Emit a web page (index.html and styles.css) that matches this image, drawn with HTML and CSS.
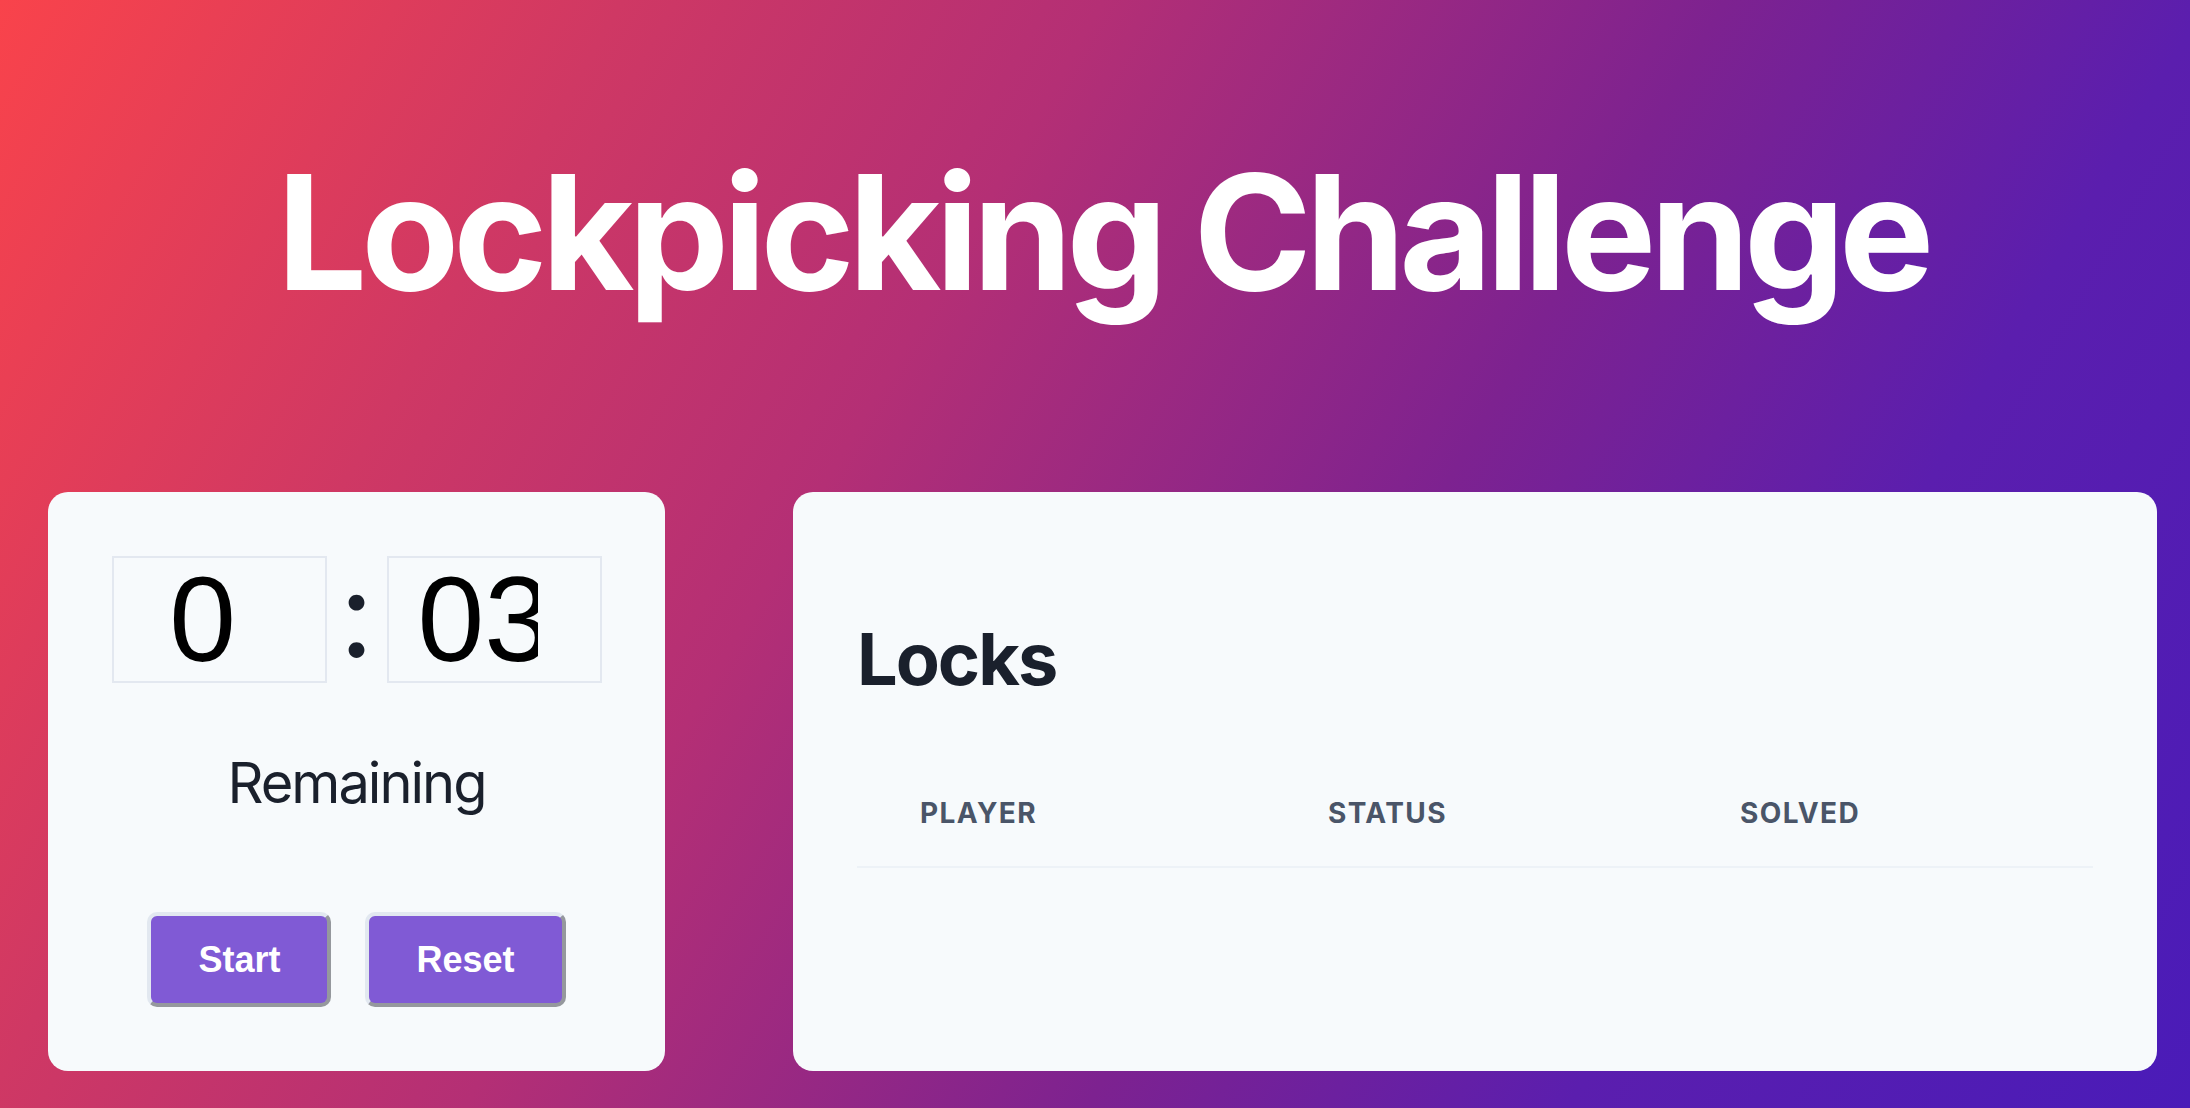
FILE: index.html
```html
<!DOCTYPE html>
<html lang="en">
<head>
<meta charset="utf-8">
<title>Lockpicking Challenge</title>
<link rel="stylesheet" href="styles.css">
</head>
<body>
<div class="page">
  <h1 class="title">Lockpicking Challenge</h1>
  <div class="panels">
    <section class="card timer">
      <div class="clock">
        <div class="digit-box"><span class="digit-text centered">0</span></div>
        <span class="colon">:</span>
        <div class="digit-box"><span class="digit-text clipped">03</span></div>
      </div>
      <p class="remaining">Remaining</p>
      <div class="actions">
        <button class="btn" type="button">Start</button>
        <button class="btn" type="button">Reset</button>
      </div>
    </section>
    <section class="card locks">
      <h2 class="locks-title">Locks</h2>
      <div class="table">
        <div class="thead">
          <div class="th">Player</div>
          <div class="th">Status</div>
          <div class="th">Solved</div>
        </div>
      </div>
    </section>
  </div>
</div>
</body>
</html>
```

FILE: styles.css
```css
* { box-sizing: border-box; }
html, body { margin: 0; padding: 0; }
body {
  width: 2190px;
  height: 1108px;
  overflow: hidden;
  font-family: Inter, "Noto Sans", sans-serif;
  background: linear-gradient(120deg, #f9434b 0%, #cf3864 22%, #b42f75 39%, #7d2290 61%, #5b1eae 78%, #4a1bb8 100%);
  color: #1a202c;
}
.page {
  padding: 0 33px 0 48px;
}
.title {
  margin: 0;
  padding-top: 136px;
  height: 492px;
  font-size: 160px;
  line-height: 192px;
  font-weight: 700;
  color: #ffffff;
  text-align: center;
  letter-spacing: -6px;
}
.panels {
  display: grid;
  grid-template-columns: 617px 1fr;
  column-gap: 128px;
  height: 579px;
}
.card {
  background: #f7fafc;
  border-radius: 20px;
  padding: 64px;
}
.timer {
  display: flex;
  flex-direction: column;
  align-items: center;
}
.clock {
  display: flex;
  align-items: center;
  justify-content: center;
  height: 127px;
}
.digit-box {
  width: 215px;
  height: 127px;
  border: 2px solid #e3e8f0;
  padding: 0 62px 0 29px;
  display: flex;
  align-items: center;
}
.digit-text {
  display: block;
  width: 100%;
  white-space: nowrap;
  font-family: "Liberation Sans", Arial, sans-serif;
  font-size: 120px;
  line-height: 123px;
  color: #000000;
}
.digit-text.centered { text-align: center; }
.digit-text.clipped { overflow: hidden; }
.colon {
  width: 60px;
  text-align: center;
  font-size: 120px;
  line-height: 1;
  color: #1a202c;
  position: relative;
  top: -6px;
}
.remaining {
  margin: 67px 0 0;
  font-size: 56px;
  line-height: 67px;
  font-weight: 400;
  letter-spacing: -2px;
  color: #1a202c;
}
.actions {
  margin-top: 95px;
  display: flex;
  gap: 34px;
  justify-content: center;
}
.btn {
  height: 95px;
  padding: 0 47px;
  background: #805ad5;
  color: #ffffff;
  font-family: "Liberation Sans", Arial, sans-serif;
  font-weight: 700;
  font-size: 36px;
  border: 4px solid;
  border-color: #e2e8f0 #95989d #95989d #e2e8f0;
  border-radius: 10px;
}
.locks-title {
  margin: 60px 0 0;
  font-size: 72px;
  line-height: 86px;
  font-weight: 700;
  letter-spacing: -2px;
  color: #1a202c;
}
.table {
  margin-top: 94px;
}
.thead {
  display: grid;
  grid-template-columns: 408px 412px 1fr;
  padding: 0 0 36px 63px;
  border-bottom: 2px solid #edf2f7;
}
.th {
  font-size: 28px;
  line-height: 34px;
  font-weight: 700;
  text-transform: uppercase;
  letter-spacing: 1.4px;
  color: #4a5568;
}
```
